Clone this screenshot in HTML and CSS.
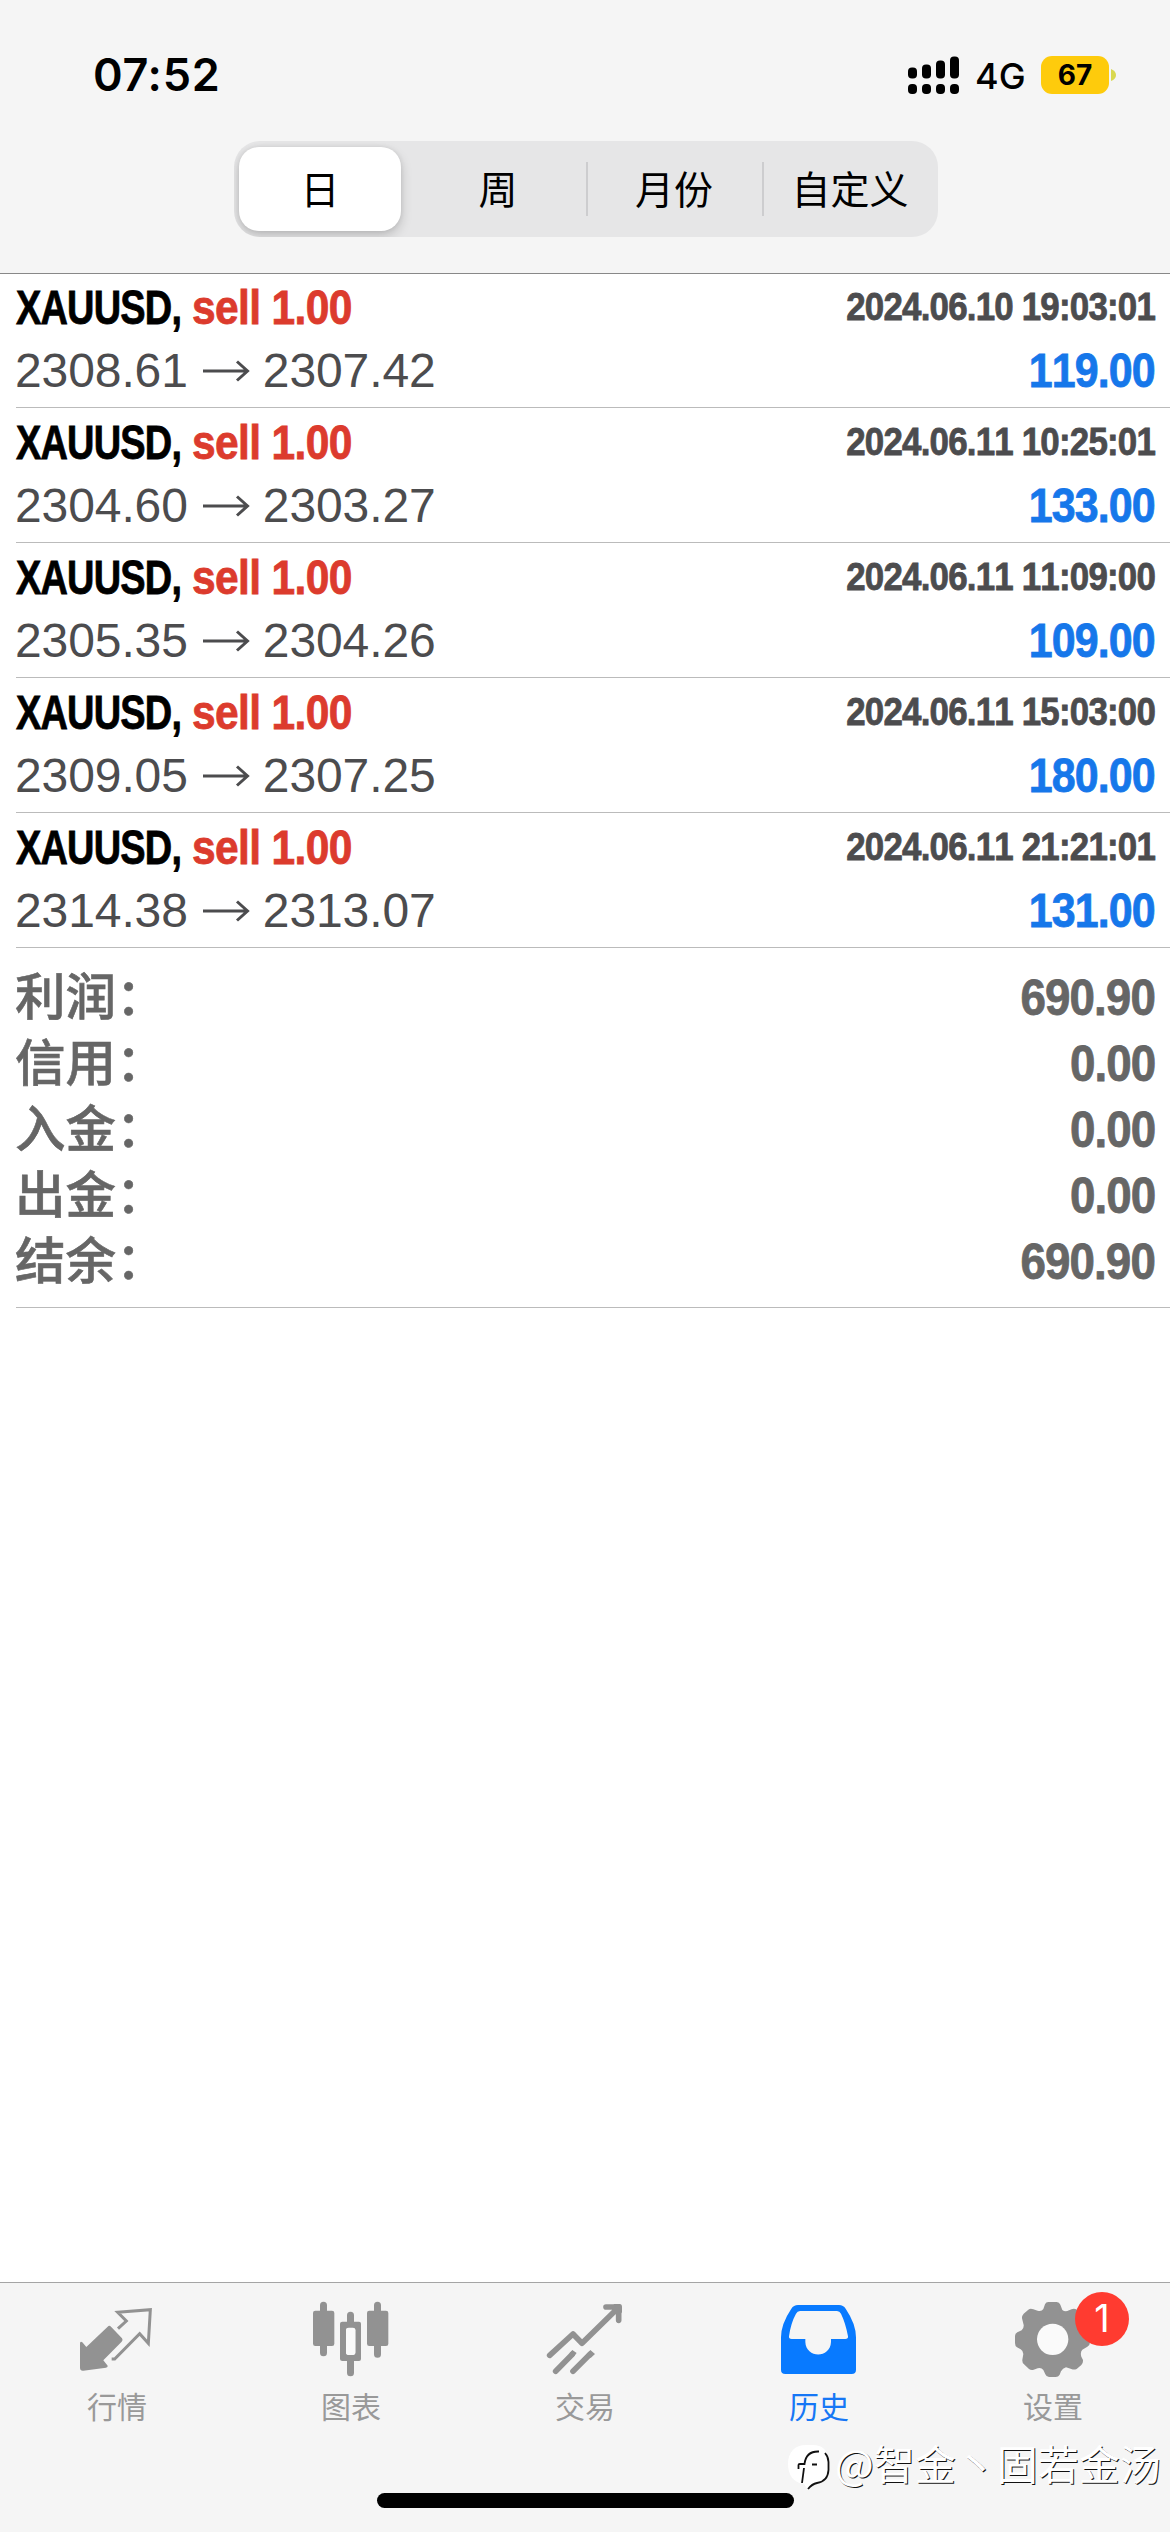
FILE: index.html
```html
<!DOCTYPE html>
<html lang="zh-CN">
<head>
<meta charset="utf-8">
<title>历史</title>
<link rel="stylesheet" href="styles.css">
</head>
<body>
<div class="app">
  <header class="header">
    <div class="status">
      <span class="clock">07:52</span>
      <div class="status-right">
        <svg class="signal" viewBox="0 0 52 38">
          <rect x="0" y="11.500" width="9" height="11" rx="4"/><rect x="14" y="8.500" width="9" height="14" rx="4"/><rect x="28" y="4.500" width="9" height="18" rx="4"/><rect x="42" y="0.500" width="9" height="22" rx="4"/>
          <rect x="0" y="28" width="9" height="10" rx="4"/><rect x="14" y="28" width="9" height="10" rx="4"/><rect x="28" y="28" width="9" height="10" rx="4"/><rect x="42" y="28" width="9" height="10" rx="4"/>
        </svg>
        <span class="network">4G</span>
        <span class="battery">67</span>
        <svg class="nub" viewBox="0 0 5 12"><path d="M0 0Q5 2 5 6T0 12Z"/></svg>
      </div>
    </div>
    <nav class="segments">
      <span class="segment selected">日</span>
      <span class="segment">周</span>
      <span class="segment divided">月份</span>
      <span class="segment divided">自定义</span>
    </nav>
  </header>

  <main class="content">
    <ul class="deals">
      <li class="deal">
        <div class="line"><span class="symbol">XAUUSD,</span><span class="side">sell 1.00</span><time class="date">2024.06.10 19:03:01</time></div>
        <div class="line"><span class="price">2308.61</span><svg class="arrow" viewBox="0 0 48 24"><path d="M0 12H44M34 2.500L44.500 12L34 21.500"/></svg><span class="price">2307.42</span><span class="profit">119.00</span></div>
      </li>
      <li class="deal">
        <div class="line"><span class="symbol">XAUUSD,</span><span class="side">sell 1.00</span><time class="date">2024.06.11 10:25:01</time></div>
        <div class="line"><span class="price">2304.60</span><svg class="arrow" viewBox="0 0 48 24"><path d="M0 12H44M34 2.500L44.500 12L34 21.500"/></svg><span class="price">2303.27</span><span class="profit">133.00</span></div>
      </li>
      <li class="deal">
        <div class="line"><span class="symbol">XAUUSD,</span><span class="side">sell 1.00</span><time class="date">2024.06.11 11:09:00</time></div>
        <div class="line"><span class="price">2305.35</span><svg class="arrow" viewBox="0 0 48 24"><path d="M0 12H44M34 2.500L44.500 12L34 21.500"/></svg><span class="price">2304.26</span><span class="profit">109.00</span></div>
      </li>
      <li class="deal">
        <div class="line"><span class="symbol">XAUUSD,</span><span class="side">sell 1.00</span><time class="date">2024.06.11 15:03:00</time></div>
        <div class="line"><span class="price">2309.05</span><svg class="arrow" viewBox="0 0 48 24"><path d="M0 12H44M34 2.500L44.500 12L34 21.500"/></svg><span class="price">2307.25</span><span class="profit">180.00</span></div>
      </li>
      <li class="deal">
        <div class="line"><span class="symbol">XAUUSD,</span><span class="side">sell 1.00</span><time class="date">2024.06.11 21:21:01</time></div>
        <div class="line"><span class="price">2314.38</span><svg class="arrow" viewBox="0 0 48 24"><path d="M0 12H44M34 2.500L44.500 12L34 21.500"/></svg><span class="price">2313.07</span><span class="profit">131.00</span></div>
      </li>
    </ul>
    <dl class="summary">
      <div class="total"><dt>利润：</dt><dd>690.90</dd></div>
      <div class="total"><dt>信用：</dt><dd>0.00</dd></div>
      <div class="total"><dt>入金：</dt><dd>0.00</dd></div>
      <div class="total"><dt>出金：</dt><dd>0.00</dd></div>
      <div class="total"><dt>结余：</dt><dd>690.90</dd></div>
    </dl>
  </main>

  <footer class="tabbar">
    <div class="tab">
      <svg class="icon" viewBox="51 90 240 240">
        <path class="fill" d="M143 170Q148 165 153 170L186 205Q190 210 185 215L130 271L143 287Q144 292 138 293L70 302Q60 303 60 293V220Q61 213 67 217L79 231Z"/>
        <path class="stroke" stroke-width="9" d="M174 176L199 153L173 127L271 119L265 220L239 191L164 267H155"/>
      </svg>
      <span class="tab-label">行情</span>
    </div>
    <div class="tab">
      <svg class="icon" viewBox="753 90 240 240">
        <path class="stroke round" stroke-width="21" d="M790.500 106V248M871.500 136V166M871.500 268V308M952.500 106V253"/>
        <rect class="fill" x="759" y="122" width="64" height="106" rx="7"/><rect class="fill" x="921" y="122" width="64" height="106" rx="7"/>
        <path class="fill" fill-rule="evenodd" d="M847 155H897Q903 155 903 161V267Q903 273 897 273H847Q840 273 840 267V161Q840 155 847 155ZM866 173Q858 173 858 181V247Q858 255 866 255H878Q886 255 886 247V181Q886 173 878 173Z"/>
        <rect class="hollow" x="858" y="173" width="28" height="82" rx="8"/>
      </svg>
      <span class="tab-label">图表</span>
    </div>
    <div class="tab">
      <svg class="icon" viewBox="75 90 240 240">
        <path class="stroke round" stroke-width="17" d="M89 256L159 192L186 220L294 114M258 111H296V151M107 304L157 253M159 304L210 253"/>
        <path class="fill" d="M157 240L170 249L160 261L148 250ZM211 240L225 252L212 264L200 252ZM280 102H300Q306 103 306 110V130Z"/>
      </svg>
      <span class="tab-label">交易</span>
    </div>
    <div class="tab active">
      <svg class="icon" viewBox="777 90 240 240">
        <path class="fill" fill-rule="evenodd" d="M834 105H957Q970 105 977 116Q1008 162 1008 202V299Q1008 312 995 312H796Q783 312 783 299V202Q783 162 814 116Q821 105 834 105ZM840 123Q832 123 828 131Q812 160 807 199Q806 207 815 207H856V216C858 266 931 266 933 216V207H976Q985 207 984 199Q977 160 963 131Q959 123 951 123Z"/>
      </svg>
      <span class="tab-label">历史</span>
    </div>
    <div class="tab">
      <svg class="icon" viewBox="99 90 240 240">
        <path class="fill" fill-rule="evenodd" d="M205 96H230Q238 96 241 104L247 120Q256 127 267 121Q281 112 291 119L304 133Q308 140 304 150L300 164Q303 176 312 182L324 187Q330 191 330 200V217Q330 226 322 230L307 239Q300 247 304 260L309 270Q310 279 304 285L290 297Q282 300 274 297L258 292Q248 295 243 304L239 314Q235 321 227 321H207Q199 321 196 313L190 300Q184 292 173 295L161 299Q153 301 147 297L132 283Q126 277 127 269L130 252Q130 243 122 238L111 232Q105 228 105 219V198Q105 190 112 187L125 181Q132 175 131 165L126 145Q125 138 131 131L145 119Q151 114 160 118L173 122Q185 125 190 117L195 103Q198 96 205 96Z"/>
        <circle class="hollow" cx="218" cy="208" r="47"/>
      </svg>
      <span class="tab-label">设置</span>
      <span class="badge">1</span>
    </div>
    <span class="home"></span>
    <div class="watermark">
      <svg class="mark" viewBox="0 0 44 48">
        <path class="mark-body" d="M18 1H25C34 1 40 6 40 16V25C40 33 36 39 29 39Q23 40 20 46L16 40C5 39 0 30 0 20C0 8 7 1 18 1Z"/>
        <path class="mark-line" d="M37 9Q40.500 13 40.500 18V26C40 34 36 38 29 39Q24 40 20 45M14 39L16 24M10.500 25V21Q10.500 20 12 20H16.500Q18 7 31 7.500M24 20.500H29"/>
      </svg>
      <span class="mark-text">@智金丶固若金汤</span>
    </div>
  </footer>
</div>
</body>
</html>
```

FILE: styles.css
```css
* { box-sizing: border-box; margin: 0; padding: 0; }

body {
  width: 1170px;
  height: 2532px;
  overflow: hidden;
  background: #fff;
  color: #000;
  font-family: "Liberation Sans", "Noto Sans CJK SC", sans-serif;
}

.app { display: flex; flex-direction: column; height: 2532px; }

/* Header */
.header {
  height: 274px;
  flex: none;
  background: #f5f5f5;
  border-bottom: 1px solid #888;
}

.status {
  display: flex;
  justify-content: space-between;
  align-items: center;
  height: 141px;
  padding: 8px 54px 0 93px;
}

.clock { font: 600 45px/54px Inter, sans-serif; letter-spacing: 0.7px; }
.status-right { display: flex; align-items: center; }
.signal { width: 52px; height: 38px; margin-right: 15px; }
.network { width: 66px; font: 500 36px/40px Inter, sans-serif; letter-spacing: 0; padding-top: 2px; }

.battery {
  width: 68px;
  height: 38px;
  border-radius: 11px;
  background: #fecb0c;
  font: 700 28px/39px Inter, sans-serif;
  text-align: center;
}

.nub { width: 5px; height: 12px; margin-left: 2px; fill: #d9d84f; }

.segments {
  display: grid;
  grid-template-columns: repeat(4, 1fr);
  width: 704px;
  height: 96px;
  margin-left: 234px;
  border-radius: 26px;
  background: #e6e6e7;
  overflow: hidden;
}

.segment {
  display: flex;
  align-items: center;
  justify-content: center;
  padding-bottom: 5px;
  font: 400 39px/54px "Noto Sans CJK SC", sans-serif;
}

.selected {
  width: 162px;
  height: 84px;
  margin: 6px 0 0 5px;
  border-radius: 20px;
  background: #fff;
  box-shadow: 0 5px 12px rgba(0, 0, 0, 0.18), 0 0 5px rgba(0, 0, 0, 0.08);
}

.divided {
  background: linear-gradient(#cdcdcf, #cdcdcf) 0 21px / 2px 54px no-repeat;
}

/* Deals */
.content { flex: 1; }
.deals { list-style: none; }
.deal {
  height: 135px;
  margin-left: 16px;
  padding: 3px 15px 0 0;
  border-bottom: 1px solid #bbb;
}
.deal:first-child { height: 134px; padding-top: 2px; }
.line { display: flex; align-items: baseline; height: 63px; line-height: 63px; white-space: nowrap; }

.symbol, .side, .date, .profit, .total dd {
  font-weight: 700;
  -webkit-text-stroke: 0.8px currentColor;
}
.symbol, .side { font-size: 48px; transform-origin: left center; }
.symbol { width: 176px; letter-spacing: -1px; transform: scaleX(0.79); }
.side { width: 190px; color: #dc3b2d; letter-spacing: -0.7px; transform: scaleX(0.885); }
.date {
  margin-left: auto;
  align-self: flex-start;
  height: 61px;
  color: #4c4c4e;
  font-size: 39px;
  font-kerning: none;
  line-height: 61px;
  letter-spacing: -0.9px;
  transform: scaleX(0.895);
  transform-origin: right center;
}
.price { color: #4c4c4e; font-size: 48px; letter-spacing: -0.1px; }
.price:first-child { margin-left: -1px; }
.arrow {
  width: 48px;
  height: 24px;
  margin: 0 12px 0 15px;
  align-self: center;
  fill: none;
  stroke: #4c4c4e;
  stroke-width: 3;
}
.profit {
  margin-left: auto;
  color: #1677ea;
  font-size: 48px;
  font-kerning: none;
  letter-spacing: -1px;
  transform: scaleX(0.895);
  transform-origin: right center;
}

/* Totals */
.summary {
  height: 360px;
  margin-left: 16px;
  padding: 17px 15px 0 0;
  border-bottom: 1px solid #bbb;
  color: #666;
}
.total { display: flex; justify-content: space-between; height: 66px; line-height: 66px; }
.total dt {
  margin-left: -1px;
  font-size: 50.5px;
  font-weight: 500;
  -webkit-text-stroke: 0.6px currentColor;
}
.total dd { font-size: 50px; letter-spacing: -1px; transform: scaleX(0.915); transform-origin: right center; }

/* Tab bar */
.tabbar {
  position: relative;
  display: grid;
  grid-template-columns: repeat(5, 1fr);
  height: 250px;
  flex: none;
  border-top: 1px solid #a5a5a5;
  background: #f5f5f5;
}
.tab {
  position: relative;
  display: flex;
  flex-direction: column;
  align-items: center;
  padding-top: 17px;
  color: #999;
}
.active { color: #1677f5; }
.icon { width: 80px; height: 80px; }
.fill { fill: #929292; }
.hollow { fill: #fafafa; }
.active .fill { fill: #087aff; }
.stroke { fill: none; stroke: #929292; }
.round { stroke-linecap: round; stroke-linejoin: round; }
.tab-label { margin-top: 7px; font: 400 30px/36px "Noto Sans CJK SC", sans-serif; }
.badge {
  position: absolute;
  left: 139px;
  top: 9px;
  width: 54px;
  height: 54px;
  border-radius: 50%;
  background: #ff3b30;
  color: #fff;
  font: 400 38px/53px Inter, sans-serif;
  text-align: center;
}
.home {
  position: absolute;
  left: 377px;
  top: 210px;
  width: 417px;
  height: 15px;
  border-radius: 8px;
  background: #000;
}
.watermark {
  position: absolute;
  left: 788px;
  top: 149px;
  display: flex;
  align-items: center;
  color: #fff;
}
.mark { width: 44px; height: 48px; margin: 12px 3px 0 0; }
.mark-body { fill: #fff; }
.mark-line { fill: none; stroke: #111; stroke-width: 1.8; }
.mark-text {
  font: 400 41px/54px "Noto Sans CJK SC", sans-serif;
  white-space: nowrap;
  text-shadow: 1px 1px 0 #111;
}
```
